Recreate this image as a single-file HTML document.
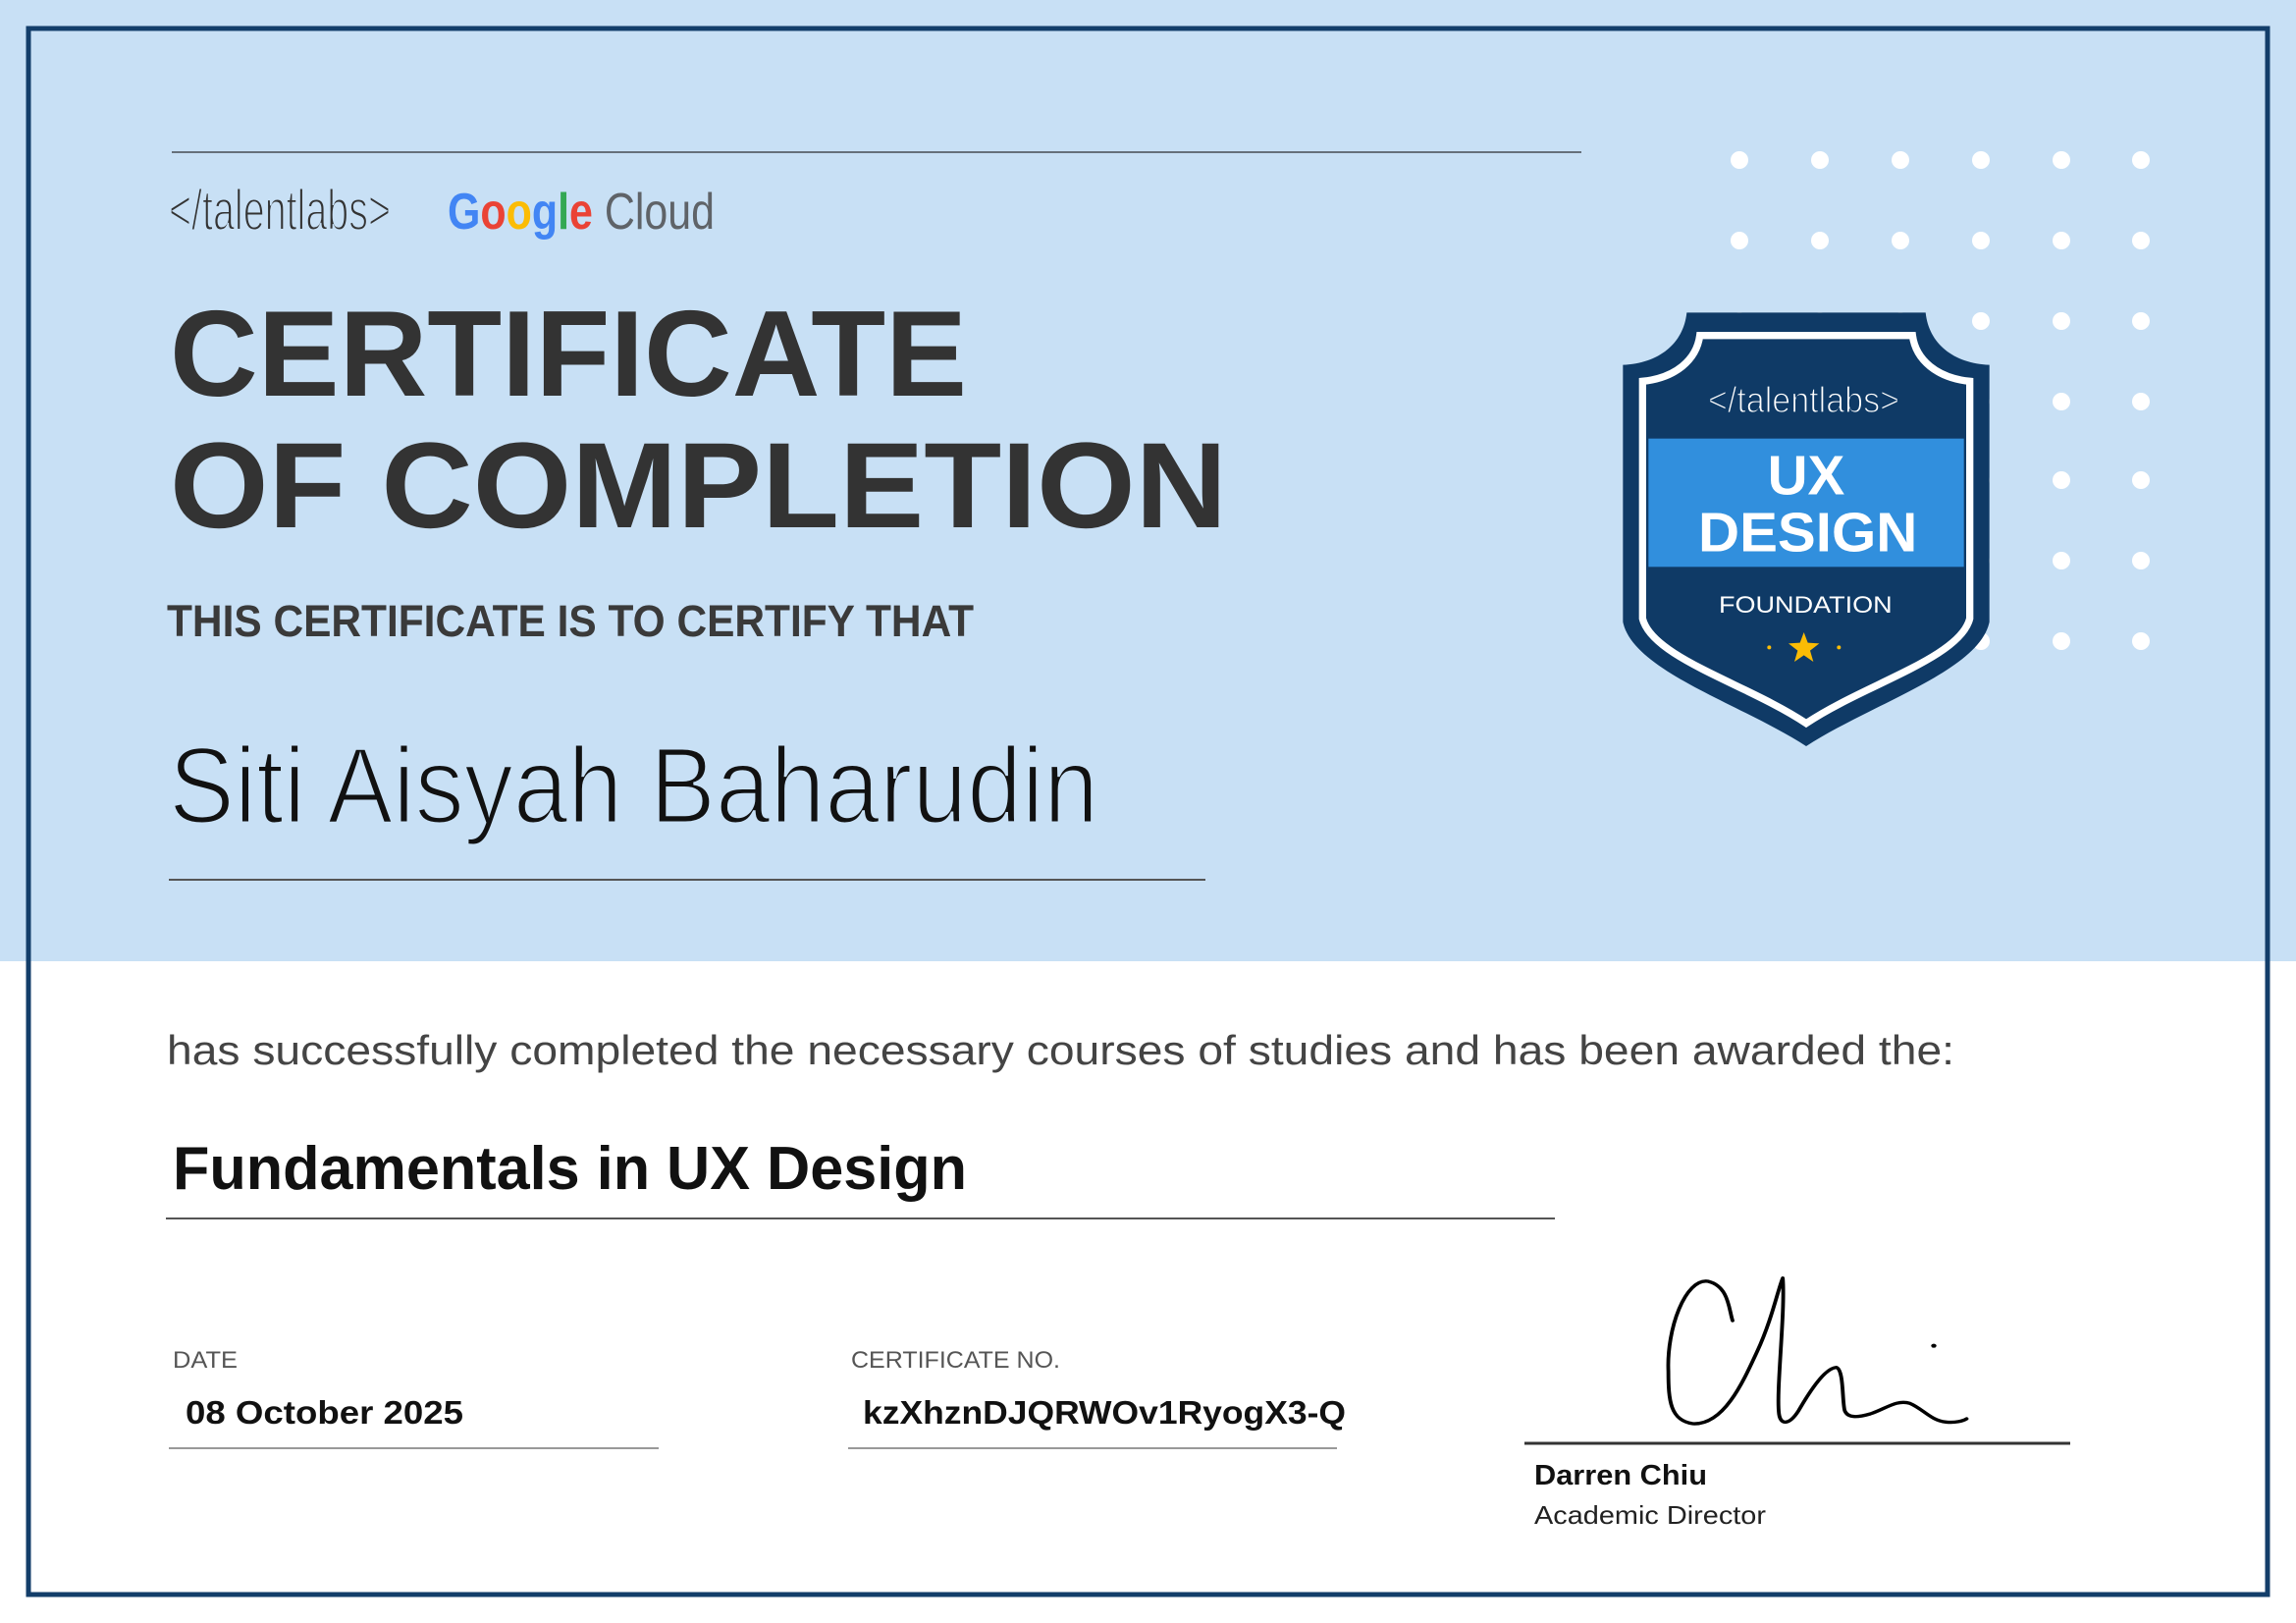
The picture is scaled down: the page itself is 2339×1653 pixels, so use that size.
<!DOCTYPE html>
<html><head><meta charset="utf-8"><style>html,body{margin:0;padding:0;background:#fff}svg{display:block}</style></head>
<body>
<svg width="2339" height="1653" viewBox="0 0 2339 1653" xmlns="http://www.w3.org/2000/svg" font-family="'Liberation Sans', sans-serif">
<rect x="0" y="0" width="2339" height="1653" fill="#fff"/>
<rect x="0" y="0" width="2339" height="979" fill="#c8e0f5"/>
<rect x="29" y="29" width="2281" height="1595" fill="none" stroke="#133e6a" stroke-width="5"/>
<line x1="175" y1="155" x2="1611" y2="155" stroke="#66707a" stroke-width="2"/>
<!-- dots -->
<g fill="#fff">
<g id="r"><circle cx="1772" cy="163" r="9"/><circle cx="1854" cy="163" r="9"/><circle cx="1936" cy="163" r="9"/><circle cx="2018" cy="163" r="9"/><circle cx="2100" cy="163" r="9"/><circle cx="2181" cy="163" r="9"/></g>
<use href="#r" y="82"/><use href="#r" y="164"/><use href="#r" y="246"/><use href="#r" y="326"/><use href="#r" y="408"/><use href="#r" y="490"/>
</g>
<!-- logos -->
<text x="172" y="234" font-size="58" fill="#333" stroke="#c8e0f5" stroke-width="2" textLength="226" lengthAdjust="spacingAndGlyphs">&lt;/talentlabs&gt;</text>
<text x="456" y="233" font-size="52" font-weight="bold" textLength="272" lengthAdjust="spacingAndGlyphs"><tspan fill="#4285f4">G</tspan><tspan fill="#ea4335">o</tspan><tspan fill="#fbbc05">o</tspan><tspan fill="#4285f4">g</tspan><tspan fill="#34a853">l</tspan><tspan fill="#ea4335">e</tspan><tspan fill="#5f6368" font-weight="normal"> Cloud</tspan></text>
<!-- heading -->
<text x="173" y="403" font-size="124" font-weight="bold" fill="#333" textLength="812" lengthAdjust="spacingAndGlyphs">CERTIFICATE</text>
<text x="173" y="537" font-size="124" font-weight="bold" fill="#333" textLength="1077" lengthAdjust="spacingAndGlyphs">OF COMPLETION</text>
<text x="170" y="648" font-size="45" font-weight="bold" fill="#3a3a3a" textLength="822" lengthAdjust="spacingAndGlyphs">THIS CERTIFICATE IS TO CERTIFY THAT</text>
<text x="172" y="838" font-size="110" fill="#111" stroke="#c8e0f5" stroke-width="3" textLength="947" lengthAdjust="spacingAndGlyphs">Siti Aisyah Baharudin</text>
<line x1="172" y1="896" x2="1228" y2="896" stroke="#555" stroke-width="2"/>
<!-- badge -->
<svg x="1640" y="300" width="400" height="470" viewBox="0 0 1200 1410">
<path d="M235,55 L965,55 C975,150 1050,210 1160,215 L1160,1000 C1130,1150 800,1250 600,1380 C400,1250 70,1150 40,1000 L40,215 C150,210 225,150 235,55 Z" fill="#0f3a66"/>
<rect x="118" y="440" width="964" height="392" fill="#318fdd"/>
<path d="M275,125 L925,125 C935,200 1000,255 1100,265 L1100,990 C1070,1110 780,1190 600,1310 C420,1190 130,1110 100,990 L100,265 C200,255 265,200 275,125 Z" fill="none" stroke="#fff" stroke-width="22"/>
<text x="300" y="360" font-size="110" fill="#fff" stroke="#0f3a66" stroke-width="4" textLength="585" lengthAdjust="spacingAndGlyphs">&lt;/talentlabs&gt;</text>
<text x="600" y="610" font-size="170" font-weight="bold" fill="#fff" text-anchor="middle">UX</text>
<text x="270" y="785" font-size="170" font-weight="bold" fill="#fff" textLength="670" lengthAdjust="spacingAndGlyphs">DESIGN</text>
<text x="333" y="972" font-size="72" fill="#fff" textLength="530" lengthAdjust="spacingAndGlyphs">FOUNDATION</text>
<circle cx="487" cy="1078" r="6" fill="#fbbc05"/><circle cx="700" cy="1078" r="6" fill="#fbbc05"/>
<path d="M593,1032 L605,1064 L640,1066 L612,1088 L622,1122 L593,1102 L564,1122 L574,1088 L546,1066 L581,1064 Z" fill="#fbbc05"/>
</svg>
<!-- body -->
<text x="170" y="1084" font-size="42" fill="#444" textLength="1821" lengthAdjust="spacingAndGlyphs">has successfully completed the necessary courses of studies and has been awarded the:</text>
<text x="176" y="1211" font-size="62" font-weight="bold" fill="#111" textLength="809" lengthAdjust="spacingAndGlyphs">Fundamentals in UX Design</text>
<line x1="169" y1="1241" x2="1584" y2="1241" stroke="#555" stroke-width="2"/>
<text x="176" y="1393" font-size="24" fill="#555" textLength="66" lengthAdjust="spacingAndGlyphs">DATE</text>
<text x="189" y="1450" font-size="33" font-weight="bold" fill="#111" textLength="283" lengthAdjust="spacingAndGlyphs">08 October 2025</text>
<line x1="172" y1="1475" x2="671" y2="1475" stroke="#999" stroke-width="2"/>
<text x="867" y="1393" font-size="24" fill="#555" textLength="213" lengthAdjust="spacingAndGlyphs">CERTIFICATE NO.</text>
<text x="879" y="1450" font-size="33" font-weight="bold" fill="#111" textLength="492" lengthAdjust="spacingAndGlyphs">kzXhznDJQRWOv1RyogX3-Q</text>
<line x1="864" y1="1475" x2="1362" y2="1475" stroke="#999" stroke-width="2"/>
<!-- signature -->
<svg x="1540" y="1270" width="600" height="300" viewBox="0 0 1560 900" preserveAspectRatio="none">
<path d="M585,225 C575,190 575,120 520,105 C460,95 410,250 415,380 C415,470 420,530 480,540 C560,545 610,420 650,320 C690,220 705,130 718,95 C725,200 700,440 708,510 C712,545 735,545 760,500 C790,440 830,370 860,368 C880,375 875,470 882,500 C890,525 920,520 950,510 C990,495 1020,465 1055,478 C1090,495 1110,530 1150,535 C1175,538 1195,532 1205,525" fill="none" stroke="#000" stroke-width="10" stroke-linecap="round" stroke-linejoin="round"/>
<ellipse cx="1118" cy="302" rx="7" ry="6" fill="#000"/>
</svg>
<line x1="1553" y1="1470" x2="2109" y2="1470" stroke="#333" stroke-width="3"/>
<text x="1563" y="1512" font-size="29" font-weight="bold" fill="#111" textLength="176" lengthAdjust="spacingAndGlyphs">Darren Chiu</text>
<text x="1563" y="1552" font-size="26" fill="#222" textLength="236" lengthAdjust="spacingAndGlyphs">Academic Director</text>
</svg>
</body></html>
